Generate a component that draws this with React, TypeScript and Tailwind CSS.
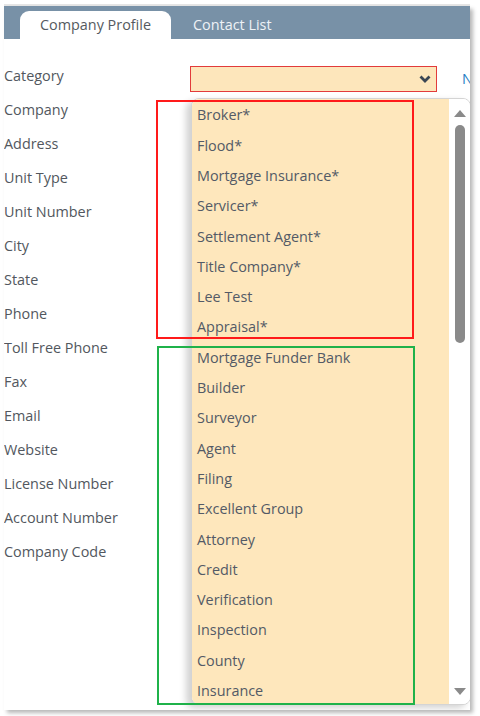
import React from "react";

const labels = [
  "Category",
  "Company",
  "Address",
  "Unit Type",
  "Unit Number",
  "City",
  "State",
  "Phone",
  "Toll Free Phone",
  "Fax",
  "Email",
  "Website",
  "License Number",
  "Account Number",
  "Company Code",
];

const items = [
  "Broker*",
  "Flood*",
  "Mortgage Insurance*",
  "Servicer*",
  "Settlement Agent*",
  "Title Company*",
  "Lee Test",
  "Appraisal*",
  "Mortgage Funder Bank",
  "Builder",
  "Surveyor",
  "Agent",
  "Filing",
  "Excellent Group",
  "Attorney",
  "Credit",
  "Verification",
  "Inspection",
  "County",
  "Insurance",
];

export default function App() {
  return (
    <div
      className="relative w-[480px] h-[716px] bg-white overflow-hidden"
      style={{ fontFamily: '"Open Sans", "Noto Sans", sans-serif' }}
    >
      <div className="absolute left-[4px] top-[4px] w-[466px] h-[2px] bg-[#e6e6e6]" />
      <div className="relative ml-[4px] mt-[6px] w-[466px] h-[704px] bg-white shadow-[3px_3px_4px_rgba(0,0,0,0.28)] overflow-hidden">
        {/* Header with tabs */}
        <div className="h-[33px] bg-[#7891a7] flex items-end pl-[16px]">
          <div className="w-[151px] h-[28px] bg-white rounded-t-[9px] flex items-center justify-center text-[14.4px] text-[#555a60]">
            Company Profile
          </div>
          <div className="ml-[22px] h-[28px] flex items-center text-[14.4px] text-[#eef2f6]">
            Contact List
          </div>
        </div>

        {/* Form */}
        <div className="pt-[20px] flex">
          <div className="w-[186px] shrink-0 flex flex-col">
            {labels.map((l) => (
              <div
                key={l}
                className="h-[34px] flex items-center text-[14.4px] text-[#52575e]"
              >
                {l}
              </div>
            ))}
          </div>
          <div className="flex items-start pt-[7px]">
            <div className="w-[247px] h-[26px] bg-[#fde6bb] border border-[#e23b3b] flex items-center justify-end pr-[5px]">
              <svg width="12" height="8" viewBox="0 0 12 8">
                <path
                  d="M1.5 1.5 L6 6 L10.5 1.5"
                  fill="none"
                  stroke="#3a4654"
                  strokeWidth="2.8"
                />
              </svg>
            </div>
            <div className="ml-[25px] mt-[2px] text-[14.4px] text-[#2a7fc4]">N</div>
          </div>
        </div>

        {/* Dropdown list */}
        <div className="absolute left-[187px] top-[92px] w-[280px] h-[607px] rounded-[8px] border border-[#d4d4d4] bg-white shadow-[-5px_3px_7px_rgba(0,0,0,0.18)] overflow-hidden flex">
          <div className="flex-1 bg-[#fee7bc] pt-[1px] flex flex-col">
            {items.map((it) => (
              <div
                key={it}
                className="h-[30.3px] shrink-0 flex items-center pl-[5px] text-[14.4px] text-[#535a66]"
              >
                {it}
              </div>
            ))}
          </div>
          <div className="w-[21px] bg-white flex flex-col items-center pt-[10px]">
            <svg width="12" height="8" viewBox="0 0 12 8">
              <path d="M0 8 L6 1 L12 8 Z" fill="#8a8a8a" />
            </svg>
            <div className="mt-[8px] w-[10px] h-[218px] rounded-full bg-[#8a8a8a]" />
            <div className="flex-1" />
            <svg width="12" height="8" viewBox="0 0 12 8" className="mb-[8px]">
              <path d="M0 0 L12 0 L6 7 Z" fill="#8a8a8a" />
            </svg>
          </div>
        </div>
      </div>

      {/* Annotation boxes */}
      <div className="absolute left-[156px] top-[100px] w-[258px] h-[239px] border-2 border-[#ff1a1a]" />
      <div className="absolute left-[157px] top-[346px] w-[258px] h-[359px] border-2 border-[#1fb24a]" />
    </div>
  );
}
